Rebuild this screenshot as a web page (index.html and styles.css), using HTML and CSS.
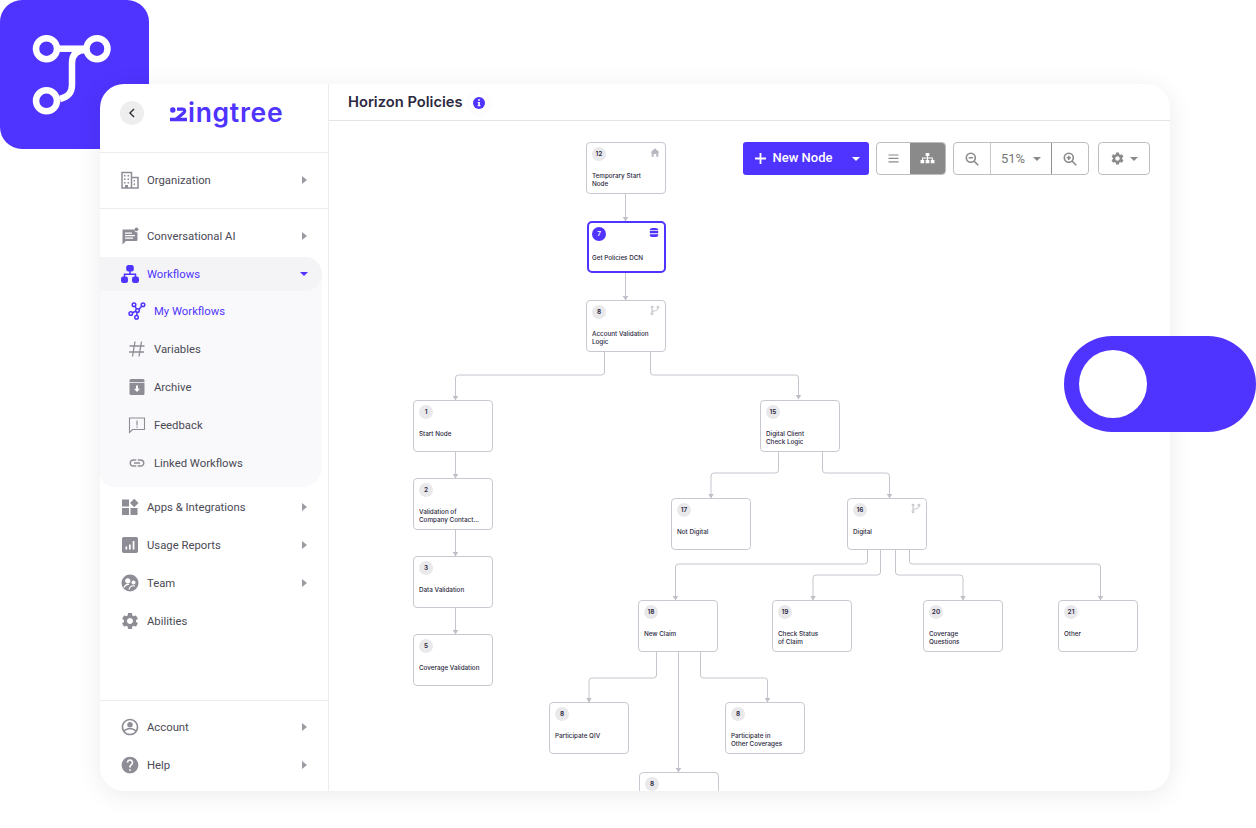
FILE: index.html
```html
<!DOCTYPE html>
<html lang="en">
<head>
    <meta charset="UTF-8">
    <meta name="viewport" content="width=device-width, initial-scale=1.0">
    <title>Horizon Policies</title>
    <link rel="stylesheet" href="styles.css">
</head>
<body>

<div class="brand-tile">
    <svg viewBox="0 0 149 149" width="149" height="149" fill="none" stroke="#fff" stroke-width="6.5">
        <circle cx="46.5" cy="48.7" r="10.5"/>
        <circle cx="97" cy="48.7" r="10.5"/>
        <circle cx="46.5" cy="100.8" r="10.5"/>
        <path d="M57 48.7H87"/>
        <path d="M86 50c-9 0-14 4-14 13V85c0 8-4 12-12 14"/>
    </svg>
</div>

<div class="toggle"><span class="toggle-knob"></span></div>

<div class="panel">
    <aside class="sidebar">
        <div class="side-head">
            <span class="back-btn">
                <svg viewBox="0 0 24 24" width="14" height="14" fill="none" stroke="#33323c" stroke-width="2.4"><path d="M15.5 5l-7 7 7 7"/></svg>
            </span>
            <div class="logo">
                <svg viewBox="0 0 17 15" width="17" height="15" fill="none" stroke="#4f33ff">
                    <circle cx="2.8" cy="3" r="2.700" fill="#4f33ff" stroke="none"/>
                    <path stroke-width="3.200" d="M7 2.200h5.500c2.400 0 2.900 2.300 1.300 3.600L6.500 12"/>
                    <path stroke-width="3.400" d="M0 12.500h16" stroke-linecap="round"/>
                </svg>
                <span class="logo-text">ingtree</span>
            </div>
        </div>

        <div class="side-section">
            <div class="nav-row">
                <svg class="nav-icon" viewBox="0 0 18 18"><path fill="none" stroke="#8e8d96" stroke-width="1.500" d="M1 17V1.500h9.500V17zM10.500 6.500H17V17H10.500"/><path fill="#8e8d96" d="M3 4h1.600v1.600H3zM6.500 4h1.600v1.600H6.500zM3 7.500h1.600v1.600H3zM6.500 7.500h1.600v1.600H6.500zM3 11h1.600v1.600H3zM6.500 11h1.600v1.600H6.500zM4 14h3v3H4zM12.600 9h1.400v1.600h-1.400zM12.600 12.400h1.400v1.600h-1.400z"/></svg>
                <span class="nav-label">Organization</span>
                <span class="arrow-right"></span>
            </div>
        </div>

        <div class="side-section side-main">
            <div class="nav-row">
                <svg class="nav-icon" viewBox="0 0 18 18"><path fill="#8e8d96" d="M2 2.500h11.500a2.800 2.800 0 0 0 3 2.800V13a1 1 0 0 1-1 1H5l-3.500 3.500V3a.5.5 0 0 1 .5-.5z"/><circle cx="15.500" cy="2.300" r="1.900" fill="#8e8d96"/><path fill="#fff" d="M4 5.500h7v1.300H4zM4 8h10v1.300H4zM4 10.500h8v1.300H4z"/></svg>
                <span class="nav-label">Conversational AI</span>
                <span class="arrow-right"></span>
            </div>

            <div class="nav-group">
                <div class="nav-row group-head">
                    <svg class="nav-icon" viewBox="0 0 18 18"><g fill="#4f33ff"><rect x="5.200" y="0" width="7.600" height="6.500" rx="2.200"/><rect x="0" y="11.500" width="7" height="6.500" rx="2.200"/><rect x="11" y="11.500" width="7" height="6.500" rx="2.200"/></g><path fill="none" stroke="#4f33ff" stroke-width="1.500" d="M9 6v3.200M3.500 12V9.200h11V12"/></svg>
                    <span class="nav-label">Workflows</span>
                    <span class="arrow-down"></span>
                </div>
                <div class="nav-row sub-row sub-active">
                    <svg class="nav-icon" viewBox="0 0 18 18" fill="none" stroke="#4f33ff" stroke-width="1.500"><circle cx="6" cy="2.800" r="1.800"/><circle cx="15" cy="2.800" r="1.800"/><circle cx="9.500" cy="8.500" r="1.800"/><circle cx="2.800" cy="11.500" r="1.800"/><circle cx="8.500" cy="15.200" r="1.800"/><path d="M6.900 4.300l1.700 2.600M11 7.500l2.700-3.500M7.800 9.200l-3.400 1.600M9.200 10.300l-.5 3.100"/></svg>
                    <span class="nav-label">My Workflows</span>
                </div>
                <div class="nav-row sub-row">
                    <svg class="nav-icon" viewBox="0 0 18 18" fill="none" stroke="#8e8d96" stroke-width="1.300"><path d="M7 1.500L4.500 16.500M13.500 1.500L11 16.500M1.500 6h15M1 12h15"/></svg>
                    <span class="nav-label">Variables</span>
                </div>
                <div class="nav-row sub-row">
                    <svg class="nav-icon" viewBox="0 0 18 18"><path fill="#8e8d96" d="M3 1h12a1.500 1.500 0 0 1 1.500 1.500V4h-15V2.500A1.500 1.500 0 0 1 3 1zM1.500 4.800h15v10.700A1.500 1.500 0 0 1 15 17H3a1.500 1.500 0 0 1-1.500-1.500z"/><path fill="#fff" d="M8 7.500h2v3.200h2L9 14l-3-3.300h2z"/></svg>
                    <span class="nav-label">Archive</span>
                </div>
                <div class="nav-row sub-row">
                    <svg class="nav-icon" viewBox="0 0 18 18"><path fill="none" stroke="#8e8d96" stroke-width="1.100" d="M1.500 2h15v11.500H4.500l-3 3z"/><path fill="#8e8d96" d="M8.400 4.500h1.200v5H8.400zM8.400 10.500h1.200v1.300H8.400z"/></svg>
                    <span class="nav-label">Feedback</span>
                </div>
                <div class="nav-row sub-row">
                    <svg class="nav-icon" viewBox="0 0 24 24"><path fill="#8e8d96" d="M3.900 12c0-1.710 1.390-3.100 3.100-3.100h4V7H7c-2.760 0-5 2.240-5 5s2.240 5 5 5h4v-1.900H7c-1.710 0-3.100-1.390-3.100-3.100zM8 13h8v-2H8v2zm9-6h-4v1.900h4c1.710 0 3.100 1.390 3.100 3.100s-1.390 3.100-3.100 3.100h-4V17h4c2.760 0 5-2.240 5-5s-2.240-5-5-5z"/></svg>
                    <span class="nav-label">Linked Workflows</span>
                </div>
            </div>

            <div class="after-group">
                <div class="nav-row">
                    <svg class="nav-icon" viewBox="0 0 18 18"><path fill="#8e8d96" d="M1 1.500h7v7H1zM1 10h7v7H1zM9.500 10h7v7h-7zM13.200.800l4.300 4.200-4.300 4.300L9 5z"/></svg>
                    <span class="nav-label">Apps &amp; Integrations</span>
                    <span class="arrow-right"></span>
                </div>
                <div class="nav-row">
                    <svg class="nav-icon" viewBox="0 0 18 18"><rect x="1" y="1" width="16" height="16" rx="1.800" fill="#8e8d96"/><path fill="#fff" d="M4.500 10.500h1.700v3H4.500zM8 8.500h1.700v5H8zM11.700 5h1.700v8.500h-1.700z"/></svg>
                    <span class="nav-label">Usage Reports</span>
                    <span class="arrow-right"></span>
                </div>
                <div class="nav-row">
                    <svg class="nav-icon" viewBox="0 0 18 18"><circle cx="9" cy="9" r="8.500" fill="#8e8d96"/><circle cx="6.800" cy="6.800" r="2.600" fill="#fff"/><circle cx="12.500" cy="8.500" r="2" fill="#fff"/><path fill="none" stroke="#fff" stroke-width="1.200" d="M3 13.500c1-2.500 3-3.200 5-3M8 15.500c1-3 3-4.300 6-3.500"/></svg>
                    <span class="nav-label">Team</span>
                    <span class="arrow-right"></span>
                </div>
                <div class="nav-row">
                    <svg class="nav-icon nav-icon-lg" viewBox="0 0 24 24"><path fill="#8e8d96" d="M19.140 12.940c.04-.3.060-.61.060-.94 0-.32-.02-.64-.07-.94l2.030-1.580c.18-.14.230-.41.120-.61l-1.920-3.320c-.12-.22-.37-.29-.59-.22l-2.390.96c-.5-.38-1.030-.7-1.620-.94l-.36-2.540c-.04-.24-.24-.41-.48-.41h-3.840c-.24 0-.43.170-.47.410l-.36 2.540c-.59.240-1.130.570-1.620.940l-2.390-.96c-.22-.08-.47 0-.59.220L2.740 8.870c-.12.210-.08.470.120.610l2.030 1.580c-.05.3-.09.630-.09.940s.020.640.070.940l-2.030 1.580c-.18.140-.23.410-.12.610l1.920 3.320c.12.220.370.290.590.220l2.390-.96c.5.380 1.030.7 1.620.94l.36 2.540c.05.240.240.410.480.410h3.840c.24 0 .44-.17.470-.41l.36-2.540c.59-.24 1.130-.56 1.620-.94l2.390.96c.22.080.47 0 .59-.22l1.920-3.320c.12-.22.070-.47-.12-.61l-2.010-1.580zM12 15.600c-1.980 0-3.600-1.620-3.600-3.600s1.620-3.600 3.600-3.600 3.600 1.620 3.600 3.600-1.620 3.600-3.600 3.600z"/></svg>
                    <span class="nav-label">Abilities</span>
                </div>
            </div>
        </div>

        <div class="side-foot">
            <div class="nav-row">
                <svg class="nav-icon nav-icon-lg" viewBox="0 0 24 24"><path fill="#8e8d96" d="M12 2C6.480 2 2 6.480 2 12s4.480 10 10 10 10-4.480 10-10S17.520 2 12 2zM12 20c-2.400 0-4.600-1-6.100-2.700C7.300 15.700 9.600 15 12 15s4.700.7 6.100 2.300C16.600 19 14.400 20 12 20zM12 4c4.400 0 8 3.600 8 8 0 1.300-.3 2.500-.9 3.600C17.300 14 14.700 13.300 12 13.300S6.700 14 4.900 15.600C4.300 14.500 4 13.300 4 12c0-4.400 3.600-8 8-8z"/><circle cx="12" cy="9.300" r="3.300" fill="#8e8d96"/></svg>
                <span class="nav-label">Account</span>
                <span class="arrow-right"></span>
            </div>
            <div class="nav-row">
                <svg class="nav-icon nav-icon-lg" viewBox="0 0 24 24"><path fill="#8e8d96" d="M12 2C6.480 2 2 6.480 2 12s4.480 10 10 10 10-4.480 10-10S17.520 2 12 2zm1 17h-2v-2h2v2zm2.070-7.750l-.9.920C13.450 12.900 13 13.500 13 15h-2v-.5c0-1.100.45-2.100 1.170-2.830l1.240-1.260c.37-.36.590-.86.590-1.410 0-1.100-.9-2-2-2s-2 .9-2 2H8c0-2.210 1.790-4 4-4s4 1.790 4 4c0 .88-.36 1.680-.93 2.250z"/></svg>
                <span class="nav-label">Help</span>
                <span class="arrow-right"></span>
            </div>
        </div>
    </aside>

    <main class="main">
        <header class="topbar">
            <h1 class="title">Horizon Policies</h1>
            <span class="info-halo">
                <svg viewBox="0 0 12 12" width="12" height="12"><circle cx="6" cy="6" r="6" fill="#4f33ff"/><path fill="#fff" d="M5.100 2.300h1.800v1.500H5.100zM4.700 5h2.200v3.300h.6v1H4.600v-1h.6V6h-.5z"/></svg>
            </span>
        </header>

        <div class="canvas">
            <svg class="edges" viewBox="329 121 841 670" width="841" height="670" fill="none" stroke="#c6c5cd" stroke-width="1">
                <defs>
                    <marker id="tip" viewBox="0 0 6 5" refX="3" refY="4.500" markerUnits="userSpaceOnUse" markerWidth="6" markerHeight="5">
                        <path d="M0 0h6L3 5z" fill="#c0bfc8" stroke="none"/>
                    </marker>
                </defs>
                <g class="edge-lines">
                    <path d="M625.500 194V221"/>
                    <path d="M625.500 273V300"/>
                    <path d="M604.500 352V372q0 3-3 3H458.500q-3 0-3 3V400"/>
                    <path d="M650.500 352V372q0 3 3 3H795.500q3 0 3 3V399"/>
                    <path d="M455.500 452V478"/>
                    <path d="M455.500 530V556"/>
                    <path d="M455.500 608V634"/>
                    <path d="M778.500 452V470q0 3-3 3H714q-3 0-3 3V498"/>
                    <path d="M822.500 452V470q0 3 3 3H886.500q3 0 3 3V498"/>
                    <path d="M867.500 550V561q0 3-3 3H678.500q-3 0-3 3V600"/>
                    <path d="M880.500 550V572q0 3-3 3H816q-3 0-3 3V600"/>
                    <path d="M895.500 550V572q0 3 3 3H960q3 0 3 3V600"/>
                    <path d="M909.500 550V561q0 3 3 3H1097.500q3 0 3 3V600"/>
                    <path d="M656.500 652V675q0 3-3 3H592q-3 0-3 3V702"/>
                    <path d="M700.500 652V675q0 3 3 3H764.500q3 0 3 3V702"/>
                    <path d="M678.500 652V772"/>
                </g>
            </svg>

            <div class="node" style="left: 257px; top: 21px;">
                <span class="badge">12</span>
                <svg class="node-icon" viewBox="0 0 12 12"><path fill="#b9b8c0" d="M6 1l5.500 5H10v5H7.500V7.800h-3V11H2V6H.5z"/></svg>
                <p class="node-text">Temporary Start<br>Node</p>
            </div>
            <div class="node node-active" style="left: 258px; top: 100px;">
                <span class="badge">7</span>
                <svg class="node-icon" viewBox="0 0 12 12"><path fill="#4f33ff" d="M6 .5c3 0 5 .7 5 1.700v.8H1v-.8C1 1.200 3 .5 6 .5zM1 4h10v3H1zM1 8h10v1.800c0 1-2 1.700-5 1.700s-5-.7-5-1.700z"/></svg>
                <p class="node-text">Get Policies DCN</p>
            </div>
            <div class="node" style="left: 257px; top: 179px;">
                <span class="badge">8</span>
                <svg class="node-icon" viewBox="0 0 12 12" fill="none" stroke="#b9b8c0" stroke-width="1.100"><circle cx="2.500" cy="2" r="1.200"/><circle cx="2.500" cy="10" r="1.200"/><circle cx="9.500" cy="2" r="1.200"/><path d="M2.500 3.200v5.600M9.500 3.200c0 2.500-2 3-7 3.800"/></svg>
                <p class="node-text">Account Validation<br>Logic</p>
            </div>
            <div class="node" style="left: 84px; top: 279px;">
                <span class="badge">1</span>
                <p class="node-text">Start Node</p>
            </div>
            <div class="node" style="left: 84px; top: 357px;">
                <span class="badge">2</span>
                <p class="node-text">Validation of<br>Company Contact...</p>
            </div>
            <div class="node" style="left: 84px; top: 435px;">
                <span class="badge">3</span>
                <p class="node-text">Data Validation</p>
            </div>
            <div class="node" style="left: 84px; top: 513px;">
                <span class="badge">5</span>
                <p class="node-text">Coverage Validation</p>
            </div>
            <div class="node" style="left: 431px; top: 279px;">
                <span class="badge">15</span>
                <p class="node-text">Digital Client<br>Check Logic</p>
            </div>
            <div class="node" style="left: 342px; top: 377px;">
                <span class="badge">17</span>
                <p class="node-text">Not Digital</p>
            </div>
            <div class="node" style="left: 518px; top: 377px;">
                <span class="badge">16</span>
                <svg class="node-icon" viewBox="0 0 12 12" fill="none" stroke="#b9b8c0" stroke-width="1.100"><circle cx="2.500" cy="2" r="1.200"/><circle cx="2.500" cy="10" r="1.200"/><circle cx="9.500" cy="2" r="1.200"/><path d="M2.500 3.200v5.600M9.500 3.200c0 2.500-2 3-7 3.800"/></svg>
                <p class="node-text">Digital</p>
            </div>
            <div class="node" style="left: 309px; top: 479px;">
                <span class="badge">18</span>
                <p class="node-text">New Claim</p>
            </div>
            <div class="node" style="left: 443px; top: 479px;">
                <span class="badge">19</span>
                <p class="node-text">Check Status<br>of Claim</p>
            </div>
            <div class="node" style="left: 594px; top: 479px;">
                <span class="badge">20</span>
                <p class="node-text">Coverage<br>Questions</p>
            </div>
            <div class="node" style="left: 729px; top: 479px;">
                <span class="badge">21</span>
                <p class="node-text">Other</p>
            </div>
            <div class="node" style="left: 220px; top: 581px;">
                <span class="badge">8</span>
                <p class="node-text">Participate QIV</p>
            </div>
            <div class="node" style="left: 396px; top: 581px;">
                <span class="badge">8</span>
                <p class="node-text">Participate in<br>Other Coverages</p>
            </div>
            <div class="node" style="left: 310px; top: 651px;">
                <span class="badge">8</span>
            </div>

            <div class="toolbar">
                <button class="btn-primary">
                    <svg viewBox="0 0 12 12" width="11" height="11"><path fill="#fff" d="M5 0h2v5h5v2H7v5H5V7H0V5h5z"/></svg>
                    <span class="btn-primary-label">New Node</span>
                    <span class="caret caret-white"></span>
                </button>
                <div class="btn-group">
                    <span class="btn-cell view-cell">
                        <svg viewBox="0 0 12 12" width="11" height="11"><path fill="#8a8a8a" d="M.5 1.500h11v1.300H.5zM.5 5.300h11v1.300H.5zM.5 9.100h11v1.300H.5z"/></svg>
                    </span>
                    <span class="btn-cell view-cell view-on">
                        <svg viewBox="0 0 16 14" width="15" height="13"><path fill="#fff" d="M6 1h4v3.200H8.600V6h5.200v2.500h1.700V12h-4V8.500h1.200V7.100H8.600v1.400h1.400V12H6V8.500h1.400V7.100H3.300v1.400h1.200V12h-4V8.500h1.700V6h5.200V4.200H6z"/></svg>
                    </span>
                </div>
                <div class="btn-group">
                    <span class="btn-cell zoom-cell">
                        <svg viewBox="0 0 14 14" width="14" height="14" fill="none" stroke="#8a8a8a" stroke-width="1.600"><circle cx="5.800" cy="5.800" r="4.500"/><path d="M9.200 9.200l4 4M3.700 5.800h4.200"/></svg>
                    </span>
                    <span class="btn-cell pct-cell">51%<span class="caret"></span></span>
                    <span class="btn-cell zoom-cell">
                        <svg viewBox="0 0 14 14" width="14" height="14" fill="none" stroke="#8a8a8a" stroke-width="1.600"><circle cx="5.800" cy="5.800" r="4.500"/><path d="M9.200 9.200l4 4M3.700 5.800h4.200M5.800 3.700v4.200"/></svg>
                    </span>
                </div>
                <div class="btn-group gear-btn">
                    <svg viewBox="0 0 24 24" width="15" height="15"><path fill="#8a8a8a" d="M19.140 12.940c.04-.3.060-.61.060-.94 0-.32-.02-.64-.07-.94l2.030-1.580c.18-.14.230-.41.120-.61l-1.920-3.320c-.12-.22-.37-.29-.59-.22l-2.390.96c-.5-.38-1.030-.7-1.620-.94l-.36-2.540c-.04-.24-.24-.41-.48-.41h-3.840c-.24 0-.43.170-.47.410l-.36 2.540c-.59.240-1.130.570-1.620.940l-2.390-.96c-.22-.08-.47 0-.59.220L2.740 8.870c-.12.210-.08.470.120.610l2.030 1.580c-.05.3-.09.630-.09.940s.020.640.070.940l-2.030 1.580c-.18.140-.23.410-.12.610l1.920 3.320c.12.220.370.290.590.220l2.390-.96c.5.380 1.030.7 1.620.94l.36 2.540c.05.240.240.410.480.410h3.840c.24 0 .44-.17.470-.41l.36-2.540c.59-.24 1.130-.56 1.620-.94l2.390.96c.22.080.47 0 .59-.22l1.920-3.320c.12-.22.070-.47-.12-.61l-2.010-1.580zM12 15.600c-1.980 0-3.600-1.620-3.600-3.600s1.620-3.600 3.600-3.600 3.600 1.620 3.600 3.600-1.620 3.600-3.600 3.600z"/></svg>
                    <span class="caret"></span>
                </div>
            </div>
        </div>
    </main>
</div>

</body>
</html>
```

FILE: styles.css
```css
:root {
    --purple: #4f33ff;
    --line: #ececef;
    --text: #4a4a55;
    --ink: #2b2840;
}

* {
    box-sizing: border-box;
}

body {
    margin: 0;
    width: 1256px;
    height: 828px;
    overflow: hidden;
    position: relative;
    background: #fff;
    font-family: Roboto, Arial, sans-serif;
}

.brand-tile {
    position: absolute;
    top: 0;
    left: 0;
    width: 149px;
    height: 149px;
    border-radius: 22px;
    background: var(--purple);
}

.brand-tile svg {
    display: block;
}

.toggle {
    position: absolute;
    z-index: 5;
    top: 336px;
    left: 1064px;
    width: 192px;
    height: 96px;
    padding: 14px 15px;
    border-radius: 48px;
    background: var(--purple);
}

.toggle-knob {
    display: block;
    width: 68px;
    height: 68px;
    border-radius: 50%;
    background: #fff;
}

.panel {
    position: relative;
    display: flex;
    width: 1070px;
    height: 707px;
    margin: 84px 0 0 100px;
    border-radius: 24px;
    background: #fff;
    box-shadow: 0 4px 26px rgba(0, 0, 0, 0.08);
    overflow: hidden;
}

/* sidebar */
.sidebar {
    flex: 0 0 229px;
    display: flex;
    flex-direction: column;
    border-right: 1px solid var(--line);
}

.side-head {
    display: flex;
    align-items: center;
    height: 69px;
    padding: 0 0 10px 20px;
    border-bottom: 1px solid var(--line);
}

.back-btn {
    display: flex;
    justify-content: center;
    align-items: center;
    width: 24px;
    height: 24px;
    border-radius: 50%;
    background: #eeeeef;
}

.logo {
    display: flex;
    align-items: center;
    margin-left: 26px;
    color: var(--purple);
}

.logo svg {
    margin-top: 2px;
}

.logo-text {
    margin: 0 0 2px 1px;
    font-family: Inter, Arial, sans-serif;
    font-weight: 600;
    font-size: 26.5px;
    line-height: 30px;
    letter-spacing: 0.7px;
}

.side-section {
    padding: 8px 0 9px;
    border-bottom: 1px solid var(--line);
}

.side-main {
    flex: 1;
    padding-bottom: 0;
    border-bottom: 1px solid var(--line);
}

.after-group {
    margin-top: 1px;
}

.side-foot {
    padding: 7px 0;
}

.nav-row {
    display: flex;
    align-items: center;
    height: 38px;
    padding: 0 21px 0 21px;
    color: var(--text);
    font-size: 11.3px;
}

.nav-icon {
    flex: 0 0 18px;
    width: 18px;
    height: 18px;
    margin-right: 8px;
}

.nav-icon-lg {
    flex-basis: 20px;
    width: 20px;
    height: 20px;
    margin: 0 7px 0 -1px;
}

.nav-label {
    flex: 1;
    padding-top: 1px;
}

.arrow-right {
    width: 0;
    height: 0;
    border-top: 4px solid transparent;
    border-bottom: 4px solid transparent;
    border-left: 5px solid #9b9ba3;
}

.arrow-down {
    width: 0;
    height: 0;
    border-left: 4px solid transparent;
    border-right: 4px solid transparent;
    border-top: 4px solid var(--purple);
}

.nav-group {
    width: 222px;
    height: 230px;
    margin-top: 2px;
    padding-bottom: 5px;
    border-radius: 0 20px 20px 14px;
    background: #f9f9fb;
}

.group-head {
    height: 34px;
    padding-right: 14px;
    border-radius: 0 20px 20px 0;
    background: #f4f4f7;
    color: var(--purple);
}

.sub-row {
    padding-left: 28px;
}

.sub-active {
    margin-top: 1px;
    color: var(--purple);
}

/* main area */
.main {
    flex: 1;
    display: flex;
    flex-direction: column;
    min-width: 0;
}

.topbar {
    display: flex;
    align-items: center;
    height: 37px;
    padding: 0 0 0 19px;
    border-bottom: 1px solid #e4e4e7;
}

.title {
    margin: 0;
    font-family: Inter, Arial, sans-serif;
    font-weight: 600;
    font-size: 14.7px;
    color: var(--ink);
}

.info-halo {
    display: flex;
    justify-content: center;
    align-items: center;
    width: 20px;
    height: 20px;
    margin: 1px 0 0 6px;
    border-radius: 50%;
    background: #fff;
    box-shadow: 0 0 6px rgba(0, 0, 0, 0.05);
}

.canvas {
    position: relative;
    flex: 1;
    overflow: hidden;
}

.edges {
    position: absolute;
    top: 0;
    left: 0;
}

.edge-lines path {
    marker-end: url(#tip);
}

.node {
    position: absolute;
    width: 80px;
    height: 52px;
    padding: 4px 5px;
    border: 1px solid #c9c8d0;
    border-radius: 4px;
    background: #fff;
    font-family: Inter, Arial, sans-serif;
    color: var(--ink);
}

.node-active {
    width: 79px;
    padding: 4px 3px;
    border: 2px solid var(--purple);
    border-radius: 5px;
}

.node-active .node-text {
    margin-top: 13px;
}

.node-active .badge {
    background: var(--purple);
    color: #fff;
}

.badge {
    display: flex;
    justify-content: center;
    align-items: center;
    width: 14px;
    height: 14px;
    border-radius: 50%;
    background: #e9e9ec;
    font-size: 6.5px;
    font-weight: 600;
}

.node-icon {
    position: absolute;
    top: 4px;
    right: 5px;
    width: 10px;
    height: 11px;
}

.node-text {
    margin: 11px 0 0;
    font-size: 6.3px;
    font-weight: 500;
    line-height: 8px;
    white-space: nowrap;
}

.toolbar {
    position: absolute;
    top: 21px;
    right: 20px;
    display: flex;
    gap: 7px;
}

.btn-primary {
    display: flex;
    align-items: center;
    width: 126px;
    height: 33px;
    padding: 0 9px 0 12px;
    border: 0;
    border-radius: 3px;
    background: var(--purple);
    color: #fff;
    font-family: Roboto, Arial, sans-serif;
}

.btn-primary-label {
    flex: 1;
    margin-left: 7px;
    padding-bottom: 2px;
    text-align: left;
    font-size: 13px;
    font-weight: 500;
}

.caret {
    width: 0;
    height: 0;
    border-left: 4px solid transparent;
    border-right: 4px solid transparent;
    border-top: 4px solid #8a8a8a;
}

.caret-white {
    border-top-color: #fff;
}

.btn-group {
    display: flex;
    height: 33px;
    border: 1px solid #bdbdc2;
    border-radius: 4px;
    background: #fff;
    overflow: hidden;
}

.btn-cell {
    display: flex;
    justify-content: center;
    align-items: center;
}

.view-cell {
    width: 33.5px;
}

.view-on {
    width: 35px;
    background: #8a8a8a;
}

.zoom-cell {
    width: 36px;
}

.pct-cell {
    gap: 8px;
    width: 62px;
    border-left: 1px solid #c8c8cc;
    border-right: 1px solid #8f8f94;
    color: #777;
    font-size: 13px;
}

.gear-btn {
    justify-content: center;
    align-items: center;
    gap: 5px;
    width: 52px;
    margin-left: 2px;
}
```
